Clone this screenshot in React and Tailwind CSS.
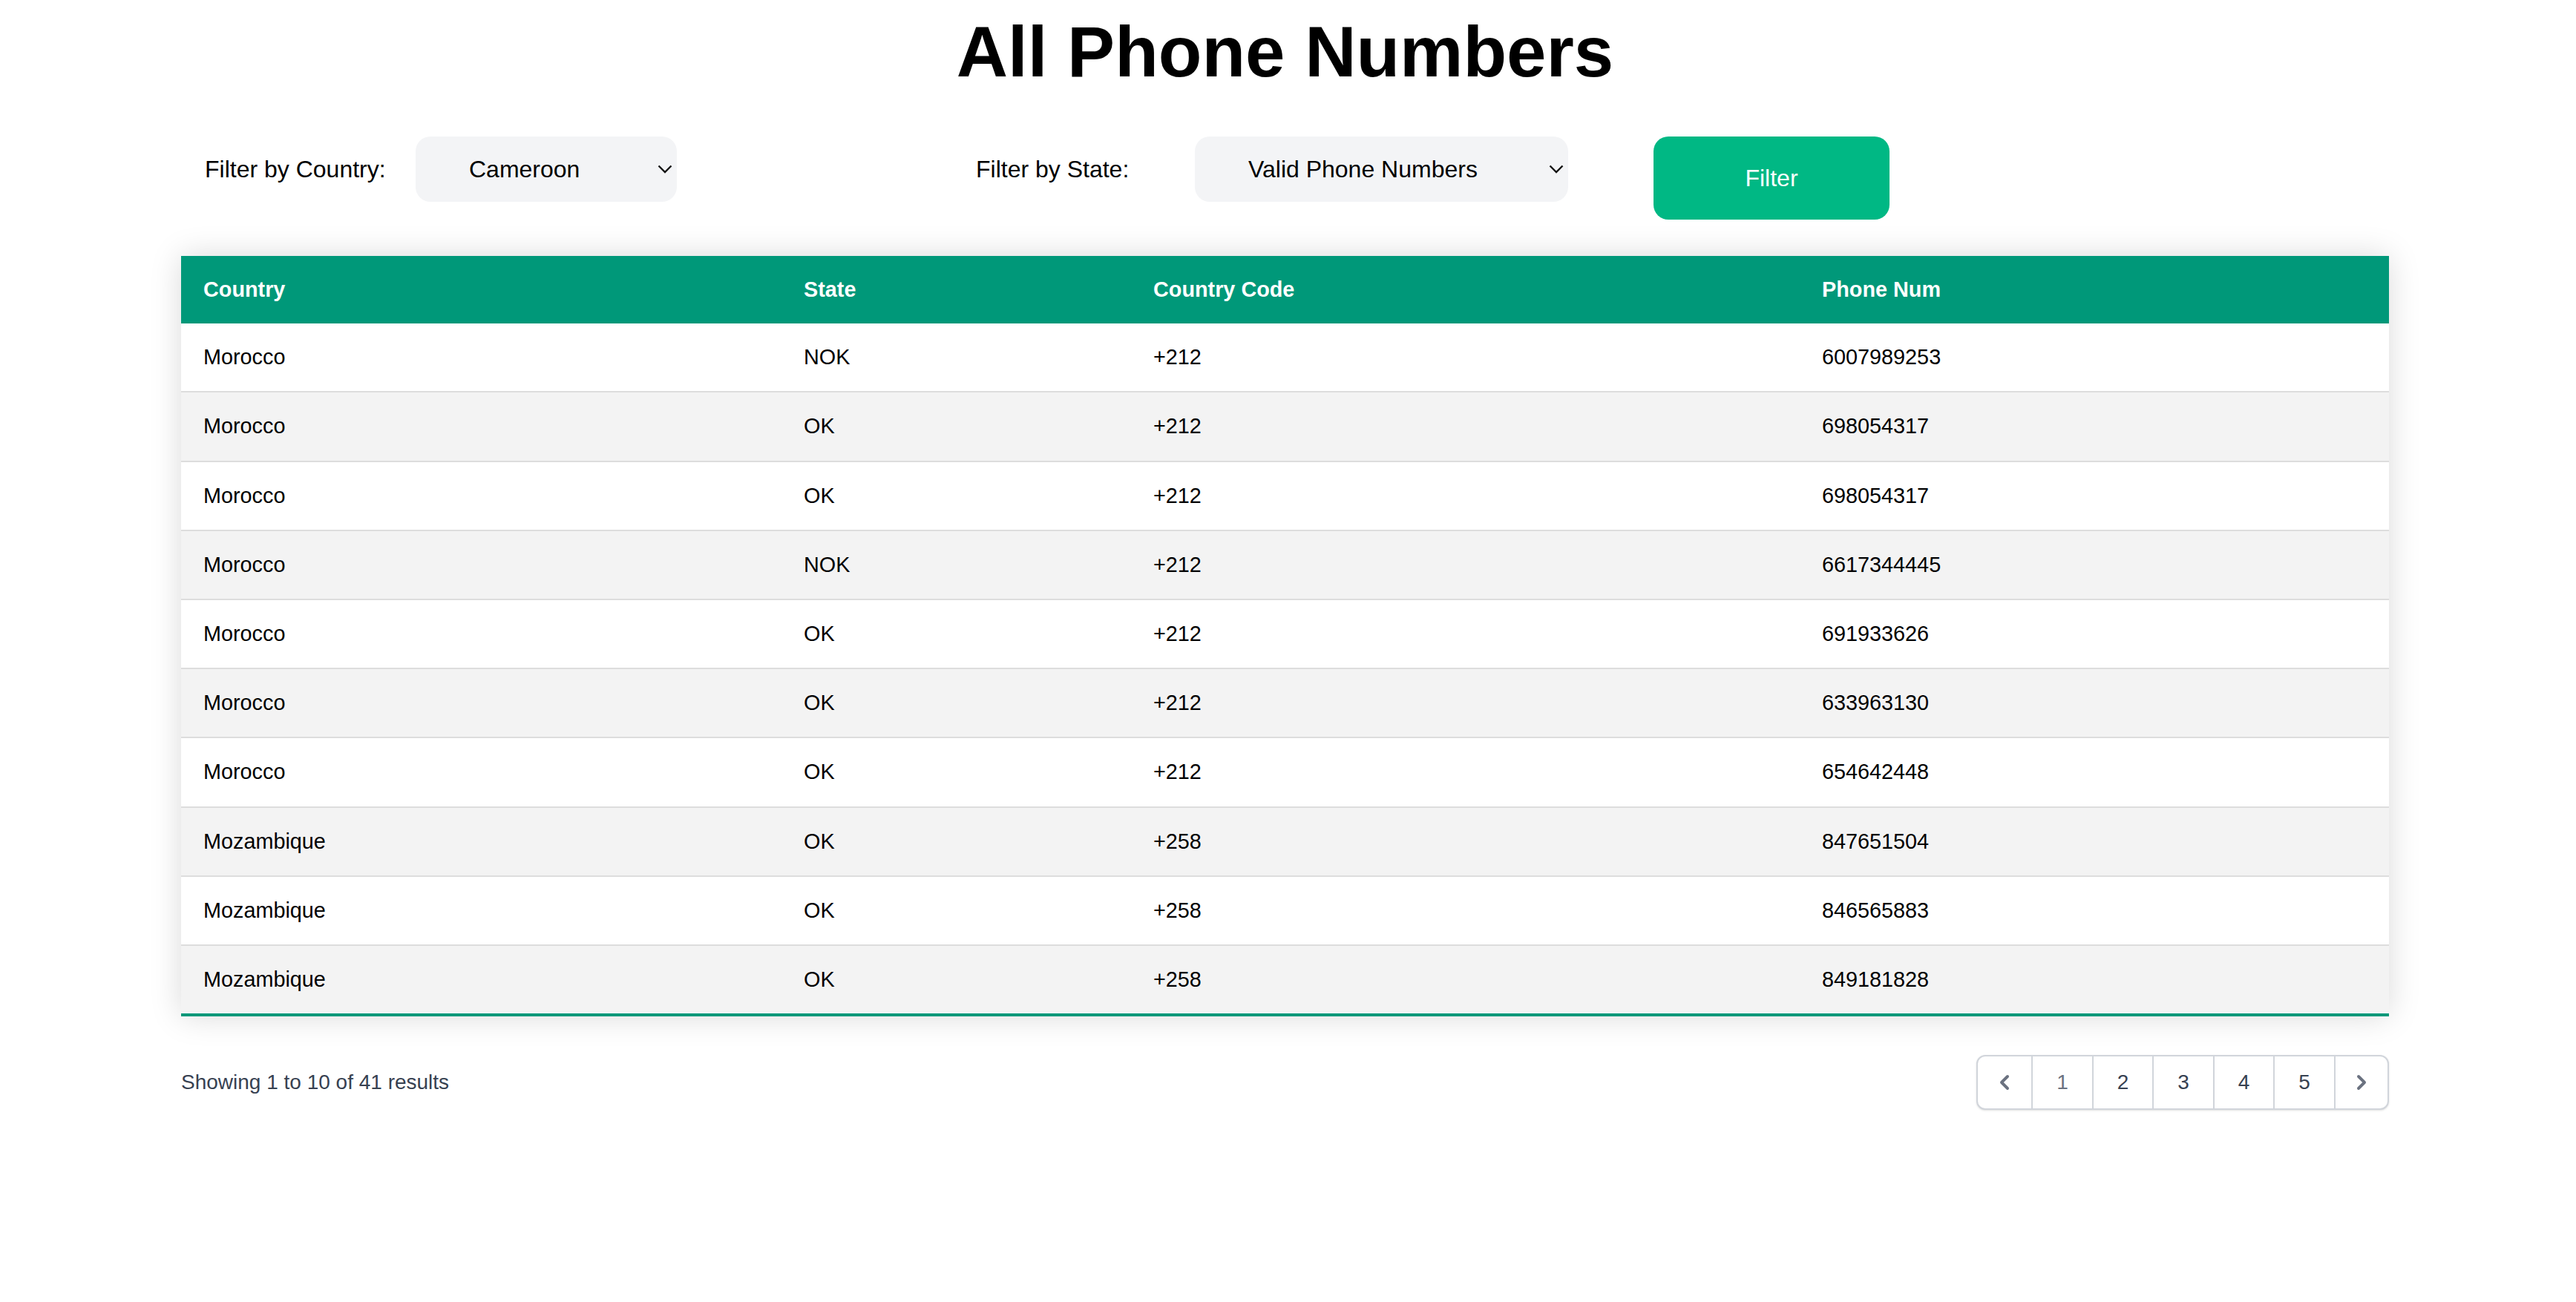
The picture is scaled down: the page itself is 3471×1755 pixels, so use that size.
import React from "react";

const rows = [
  ["Morocco", "NOK", "+212", "6007989253"],
  ["Morocco", "OK", "+212", "698054317"],
  ["Morocco", "OK", "+212", "698054317"],
  ["Morocco", "NOK", "+212", "6617344445"],
  ["Morocco", "OK", "+212", "691933626"],
  ["Morocco", "OK", "+212", "633963130"],
  ["Morocco", "OK", "+212", "654642448"],
  ["Mozambique", "OK", "+258", "847651504"],
  ["Mozambique", "OK", "+258", "846565883"],
  ["Mozambique", "OK", "+258", "849181828"],
];

function Chevron() {
  return (
    <svg width="20" height="12" viewBox="0 0 20 12" className="shrink-0">
      <polyline points="1.5,1.5 10,10 18.5,1.5" fill="none" stroke="#111" strokeWidth="2.4" />
    </svg>
  );
}

function FakeSelect({ value, width }) {
  return (
    <div
      className={`h-[88px] ${width} rounded-[20px] bg-[#f3f4f6] flex items-center justify-between pl-[72px] pr-[6px] text-[32px] text-black`}
    >
      <span>{value}</span>
      <Chevron />
    </div>
  );
}

export default function App() {
  return (
    <div className="min-h-screen w-full bg-white font-['Liberation_Sans',Arial,sans-serif] text-black">
      <h1 className="pr-[8px] pt-[22px] text-center text-[96px] font-bold leading-[96px]">
        All Phone Numbers
      </h1>

      <div className="mt-[66px] flex items-start pl-[276px]">
        <div className="flex h-[88px] w-[284px] items-center text-[32px]">Filter by Country:</div>
        <FakeSelect value="Cameroon" width="w-[352px]" />
        <div className="ml-[403px] flex h-[88px] w-[295px] items-center text-[32px]">Filter by State:</div>
        <FakeSelect value="Valid Phone Numbers" width="w-[503px]" />
        <button className="ml-[115px] flex h-[112px] w-[318px] items-center justify-center rounded-[20px] bg-[#00b884] text-[32px] text-white">
          Filter
        </button>
      </div>

      <div className="ml-[244px] mt-[49px] w-[2975px] shadow-[0_0_40px_rgba(0,0,0,0.15)]">
        <table className="w-full table-fixed border-collapse text-[28.8px] leading-[1.5]">
          <colgroup>
            <col className="w-[809px]" />
            <col className="w-[471px]" />
            <col className="w-[901px]" />
            <col className="w-[794px]" />
          </colgroup>
          <thead>
            <tr className="bg-[#009879] text-left text-white">
              <th className="px-[30px] py-[24px] font-bold">Country</th>
              <th className="px-[30px] py-[24px] font-bold">State</th>
              <th className="px-[30px] py-[24px] font-bold">Country Code</th>
              <th className="px-[30px] py-[24px] font-bold">Phone Num</th>
            </tr>
          </thead>
          <tbody>
            {rows.map((r, i) => (
              <tr
                key={i}
                className={`${i % 2 === 1 ? "bg-[#f3f3f3]" : "bg-white"} ${
                  i === rows.length - 1 ? "border-b-[4px] border-[#009879]" : "border-b-2 border-[#dddddd]"
                }`}
              >
                {r.map((c, j) => (
                  <td key={j} className="px-[30px] py-[24px]">
                    {c}
                  </td>
                ))}
              </tr>
            ))}
          </tbody>
        </table>
      </div>

      <div className="ml-[244px] mt-[52px] flex w-[2975px] items-center justify-between">
        <div className="text-[28px] text-[#374151]">Showing 1 to 10 of 41 results</div>
        <div className="flex h-[74px] overflow-hidden rounded-[12px] border-2 border-[#d1d5db] bg-white shadow-sm">
          <button className="flex w-[72px] items-center justify-center text-[#6b7280]">
            <svg width="40" height="40" viewBox="0 0 20 20" fill="currentColor">
              <path
                fillRule="evenodd"
                d="M12.707 5.293a1 1 0 010 1.414L9.414 10l3.293 3.293a1 1 0 01-1.414 1.414l-4-4a1 1 0 010-1.414l4-4a1 1 0 011.414 0z"
                clipRule="evenodd"
              />
            </svg>
          </button>
          <button className="flex w-[82px] items-center justify-center border-l-2 border-[#d1d5db] text-[28px] text-[#6b7280]">1</button>
          <button className="flex w-[81px] items-center justify-center border-l-2 border-[#d1d5db] text-[28px] text-[#374151]">2</button>
          <button className="flex w-[82px] items-center justify-center border-l-2 border-[#d1d5db] text-[28px] text-[#374151]">3</button>
          <button className="flex w-[81px] items-center justify-center border-l-2 border-[#d1d5db] text-[28px] text-[#374151]">4</button>
          <button className="flex w-[82px] items-center justify-center border-l-2 border-[#d1d5db] text-[28px] text-[#374151]">5</button>
          <button className="flex w-[72px] items-center justify-center border-l-2 border-[#d1d5db] text-[#6b7280]">
            <svg width="40" height="40" viewBox="0 0 20 20" fill="currentColor">
              <path
                fillRule="evenodd"
                d="M7.293 14.707a1 1 0 010-1.414L10.586 10 7.293 6.707a1 1 0 011.414-1.414l4 4a1 1 0 010 1.414l-4 4a1 1 0 01-1.414 0z"
                clipRule="evenodd"
              />
            </svg>
          </button>
        </div>
      </div>
    </div>
  );
}
